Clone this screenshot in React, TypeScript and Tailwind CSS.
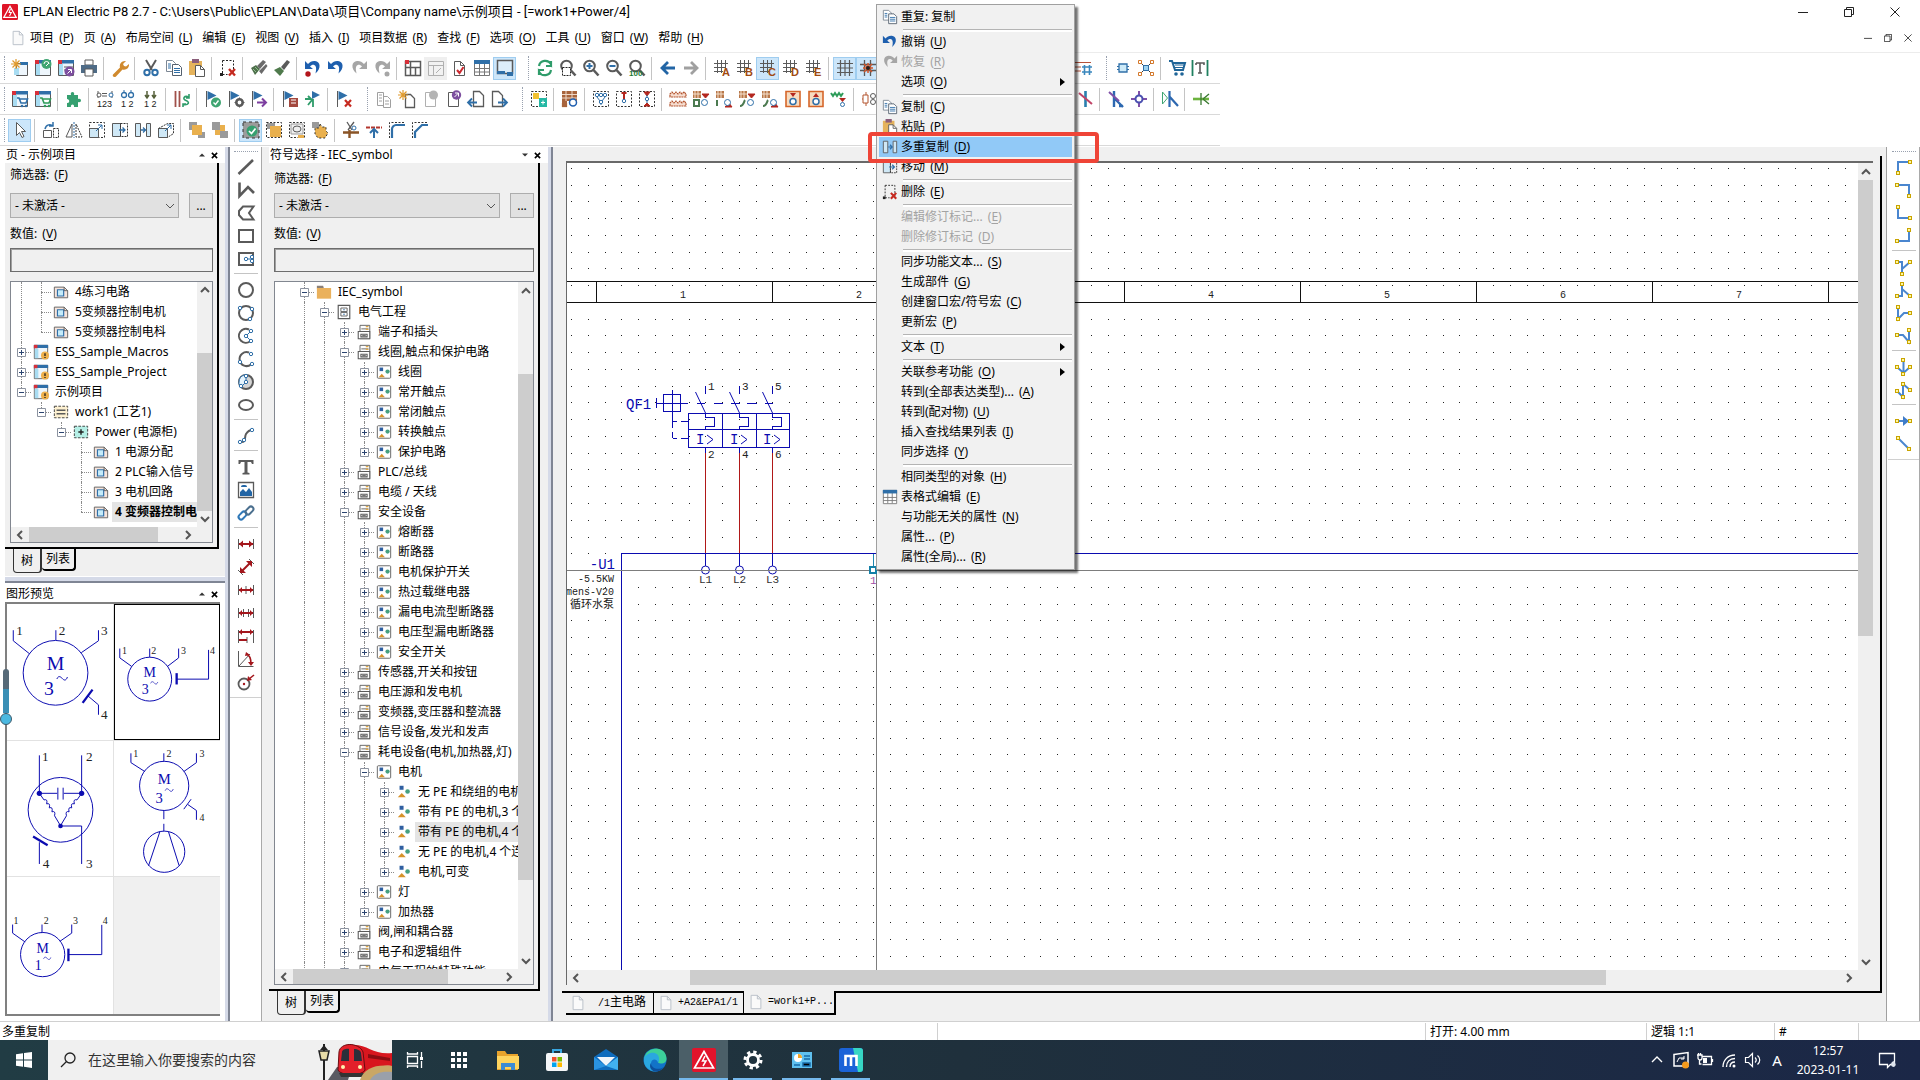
import type { ReactNode } from "react";

// ---------------------------------------------------------------- icons

const BLUE = "#2f6fa8";
const GRAY = "#5a5a5a";
const RED = "#b3261e";

const star = (
  <path d="M5 0v10M0 5h10M1.5 1.5l7 7M8.5 1.5l-7 7" stroke="#e09a2c" strokeWidth="1.2" />
);
const win = (
  <>
    <path d="M1.5 1.5h15v15h-15z" fill="#eef6fc" stroke={GRAY} />
    <path d="M1 1h16v3.5H1z" fill={BLUE} />
    <path d="M1 1h4v4H1z" fill="#d8303a" />
    <path d="M2 5h4v11H2z" fill="#a8dcf2" />
  </>
);
const page = <path d="M4.5 2.5h6l4 4v10h-10z M10.5 2.5v4h4" fill="#fff" stroke={GRAY} />;
const pageOff = <path d="M4.5 2.5h6l4 4v10h-10z M10.5 2.5v4h4" fill="#fff" stroke="#b0b0b0" />;
const dash = <path d="M1.5 1.5h15v15h-15z" fill="none" stroke="#333" strokeDasharray="2 1.5" />;
const flag = (
  <>
    <path d="M2.5 1v16" stroke={GRAY} />
    <path d="M3.5 1l9 4.5-9 4.5z" fill={BLUE} />
  </>
);
const mesh = <path d="M5.5 1v16M11.5 1v16M1 5.5h16M1 11.5h16" stroke={GRAY} strokeWidth="1.3" fill="none" />;
const meshLetter = (c: string) => (
  <>
    <path d="M4.5 1v13M8.5 1v13M12.5 1v8M1 4.5h14M1 8.5h11M1 12.5h9" stroke={GRAY} fill="none" />
    <text x="9" y="17" fontSize="11" fontWeight="bold" fontFamily="Liberation Sans" fill="#a04a10">{c}</text>
  </>
);
const lens = (inner: ReactNode) => (
  <>
    <circle cx="7.5" cy="7" r="5.3" fill="#fff" stroke={GRAY} strokeWidth="2" />
    <path d="M11.5 11l5 5.5" stroke={GRAY} strokeWidth="2.6" />
    {inner}
  </>
);
const wire = (d: string, pts: [number, number][]) => (
  <>
    <path d={d} fill="none" stroke="#4a86cf" strokeWidth="2" />
    {pts.map(([x, y]) => (
      <rect key={`${x}-${y}`} x={x - 1.5} y={y - 1.5} width="3" height="3" fill="#fff7a0" stroke="#c9a400" />
    ))}
  </>
);
const dots = (pts: [number, number][]) =>
  pts.map(([x, y]) => <circle key={`${x}-${y}`} cx={x} cy={y} r="1.7" fill="#fff" stroke={BLUE} />);
const copyIcon = (
  <>
    <path d="M1.5 1.5h6l3 3v8h-9z" fill="#fff" stroke="#7c8794" />
    <path d="M7.5 5.5h6l3 3v8h-9z" fill="#fff" stroke="#54606e" />
    <path d="M3 5h3M3 7h3M3 9h3M9 9.5h6M9 11.5h6M9 13.5h6" stroke={BLUE} />
  </>
);
const undoShape = "M1 2v8h8L6 7.500c3-3.500 7-1.500 6 4l-.5 3c6-5 5-12-.5-12.500-3-.3-5 1-7 3z";
const redoShape = "M17 2v8H9l3-2.500c-3-3.500-7-1.500-6 4l.5 3c-6-5-5-12 .5-12.500 3-.3 5 1 7 3z";
const busy = (a: string, b: string) => (
  <>
    <path d="M1 1h8v7H1z" fill="#b8784a" />
    <path d="M3 1v7M6 1v7M1 4h8" stroke="#f4e0cc" />
    <path d={a} fill={RED} stroke={RED} />
    <path d={b} fill="none" stroke="#4c7a50" strokeWidth="2" />
    <circle cx="12.500" cy="12.500" r="3" fill="#fff" stroke={BLUE} />
  </>
);

const ICONS: Record<string, ReactNode> = {
  newProject: <><path d="M5.500 4.500h11v12h-11z" fill="#eef6fc" stroke={GRAY} /><path d="M9 3h8v3H9z" fill={BLUE} /><path d="M3 9h5v7H3z" fill="#a8dcf2" />{star}</>,
  openProject: <>{win}<circle cx="12.500" cy="5" r="5" fill="#3fa572" /><path d="M10 5a2.500 2.500 0 0 1 5 0M12 7l3-3" stroke="#fff" fill="none" /></>,
  closeProject: <>{win}<path d="M7 8h9M7 11h9" stroke={GRAY} /><circle cx="12.500" cy="12.500" r="5" fill="#7d4f9f" /><path d="M10.500 14.500l3.500-3.500M11 10.500h3.500V14" stroke="#fff" fill="none" /></>,
  print: <><path d="M5 1h8v5H5z" fill="#fff" stroke={GRAY} /><path d="M1 6h16v8H1z" fill="#4e6b86" /><path d="M5 10h8v7H5z" fill="#fff" stroke={GRAY} /></>,
  wrench: <path d="M2 15.500l7-7c-1-4 2-7 6-6.500l-3 3 1 2 2 .5 3-2.500c.5 4-3 6.500-6.500 5.500l-6.500 7c-2 1.500-4-.5-3-2z" fill="#d08a2e" />,
  cut: <><path d="M4 1l6 10M14 1L8 11" stroke={GRAY} strokeWidth="2" /><circle cx="5" cy="13.500" r="2.700" fill="none" stroke={BLUE} strokeWidth="2" /><circle cx="13" cy="13.500" r="2.700" fill="none" stroke={BLUE} strokeWidth="2" /></>,
  copy: copyIcon,
  paste: <><path d="M1 2h13v14H1z" fill="#e5b35c" /><path d="M4 0h7v4H4z" fill="#8b5e7a" /><path d="M7.500 6.500h5l4 4v7h-9z" fill="#fff" stroke={GRAY} /><path d="M12.500 6.500v4h4" fill="none" stroke={GRAY} /></>,
  deleteSel: <><path d="M3.500 1.500h11v12M3.500 1.500v14h5" fill="none" stroke="#222" strokeDasharray="2 1.500" /><path d="M1 14h3v3H1z" fill="#222" /><path d="M10 10l6 6.500M16 10l-6 6.500" stroke="#c62a20" strokeWidth="2.400" /></>,
  brushes: <><path d="M1 9l5-3 4 4-5 6zM8 11l6-3" fill="#4f6f4c" /><path d="M7 7l6-6 3 2-6 7zM9 12l7-7 1.500 2-6 8z" fill="#6a6a6a" /><path d="M3 10l3 3M5 8l4 4" stroke="#8fbf8b" /></>,
  brush: <><path d="M1 11l6-3 4 4-4 5z" fill="#4f7a4c" /><path d="M8 8l6-7 3 2-6 8z" fill={GRAY} /></>,
  undoRed: <><path d={undoShape} fill="#1e5fae" /><circle cx="4" cy="15" r="2.700" fill="#b3151c" /></>,
  undo: <path d={undoShape} fill="#1e5fae" />,
  redo: <path d={redoShape} fill="#a6a6a6" />,
  redoDot: <><path d={redoShape} fill="#a6a6a6" /><circle cx="14" cy="15" r="2.500" fill="#a6a6a6" /></>,
  layout: <><path d="M1.500 2.500h15v14h-15zM6.500 2v15M1 8.500h16M11.500 8v9" fill="#fff" stroke={GRAY} strokeWidth="1.500" /><path d="M1 1h4v4H1z" fill="#d8303a" /></>,
  layoutOff: <path d="M1.500 2.500h15v14h-15zM1 6.500h16M6.500 6.500v10M9 14l5-5" fill="#f2f2f2" stroke="#b0b0b0" />,
  pageCheck: <>{page}<path d="M7 11l2.500 3 4-6" fill="none" stroke="#cc2a30" strokeWidth="2" /></>,
  table: <><path d="M1.500 1.500h15v15h-15zM1.500 9.500h15M1.500 13h15M6.500 4v12M11.500 4v12" fill="#fff" stroke="#777" /><path d="M1 1h16v4H1z" fill={BLUE} /></>,
  panelBottom: <><path d="M1.500 1.500h15v13h-15z" fill="#dceefb" stroke={GRAY} strokeWidth="1.500" /><path d="M1 12h8v3H1zM11 13h6v4h-6z" fill={BLUE} /></>,
  refresh: <path d="M3 7c1-6 9-7 12-2V2M15 2v5h-5M15 11c-1 6-9 7-12 2v3M3 16v-5h5" fill="none" stroke="#2f9c6a" strokeWidth="2.200" />,
  zoomWindow: <>{lens(null)}<path d="M3.500 8.500h8v8h-8z" fill="#fff" stroke="#222" strokeDasharray="2 1" /></>,
  zoomIn: lens(<path d="M4.500 7h6M7.500 4v6" stroke={BLUE} strokeWidth="2" />),
  zoomOut: lens(<path d="M4.500 7h6" stroke={BLUE} strokeWidth="2" />),
  zoom100: <>{lens(null)}<text x="1" y="17" fontSize="8" fontWeight="bold" fontFamily="Liberation Sans" fill="#1e7a34">100</text></>,
  back: <path d="M3 9h13M9 3L3 9l6 6" fill="none" stroke="#2265a5" strokeWidth="2.800" />,
  forward: <path d="M2 9h13M9 3l6 6-6 6" fill="none" stroke="#a0a0a0" strokeWidth="2.800" />,
  meshA: meshLetter("A"),
  meshB: meshLetter("B"),
  meshC: meshLetter("C"),
  meshD: meshLetter("D"),
  meshE: meshLetter("E"),
  grid: <path d="M4.500 1v16M9 1v16M13.500 1v16M1 4.500h16M1 9h16M1 13.500h16" stroke={GRAY} strokeWidth="1.200" />,
  gridSnap: <>{mesh}<path d="M9 4v10M4 9h10M5 5l8 8M13 5l-8 8" stroke="#d5562a" strokeWidth="1.500" /><circle cx="9" cy="9" r="2" fill="#222" /></>,
  alignGrid: <><path d="M1 3.500h16M1 8h6M1 12h6" stroke="#b5523a" /><path d="M8 8h10M8 13h10M10.500 6v10M15.500 6v10" stroke="#3a87bd" strokeWidth="1.600" /></>,
  chip: <><path d="M5 5h8v8H5z" fill="#cdeaf8" stroke={BLUE} strokeWidth="1.300" /><path d="M3 7.500h2M3 10.500h2M13 7.500h2M13 10.500h2" stroke={BLUE} /></>,
  nodes: <><path d="M3 3l12 12M15 3L3 15" stroke="#333" /><path d="M6.500 6.500h5v5h-5z" fill="#9ed3f0" stroke={BLUE} /><path d="M1.500 1.500h3v3h-3zM13.500 1.500h3v3h-3zM1.500 13.500h3v3h-3zM13.500 13.500h3v3h-3z" fill="#fff" stroke="#d5782a" /></>,
  cart: <><path d="M1 2h3l3 9h8l2-7H5" fill="none" stroke="#1f6598" strokeWidth="2" /><path d="M7 6h9M7 8.500h8" stroke="#1f6598" /><circle cx="8" cy="15" r="1.800" fill="#1f6598" /><circle cx="14" cy="15" r="1.800" fill="#1f6598" /></>,
  textBars: <><path d="M1.500 1v16M16.500 1v16" stroke="#208060" strokeWidth="1.800" /><path d="M5 4h8v2M5 4v2M9 4v10M7 14h4" fill="none" stroke={GRAY} strokeWidth="1.600" /></>,
  // second bar
  winCart: <>{win}<path d="M6 8h2l2 5h5l1.500-4H8.500" fill="#fff" stroke={BLUE} strokeWidth="1.600" /><circle cx="11" cy="16" r="1.300" fill={BLUE} /><circle cx="15" cy="16" r="1.300" fill={BLUE} /></>,
  winCartGreen: <>{win}<path d="M6 8h2l2 5h5l1.500-4H8.500" fill="#fff" stroke="#2f9c5a" strokeWidth="1.600" /><circle cx="11" cy="16" r="1.300" fill="#2f9c5a" /><circle cx="15" cy="16" r="1.300" fill="#2f9c5a" /></>,
  puzzle: <path d="M2 5h4c-1.500-4 4.500-4 3 0h4v4c4-1.500 4 4.500 0 3v5H9c1-3.500-4-3.500-3 0H2v-4c3 .5 3-4 0-4z" fill="#35a070" />,
  num123: <><path d="M2 1v7M6 3.500h5M6 6h5M16 1v7" fill="none" stroke={GRAY} /><circle cx="3" cy="5" r="2" fill="#fff" stroke={GRAY} /><circle cx="15" cy="5" r="2" fill="#fff" stroke={BLUE} /><text x="1" y="17" fontSize="9" fontFamily="Liberation Sans" fill="#222">123</text></>,
  num12: <><circle cx="5" cy="5" r="2.500" fill="#fff" stroke={BLUE} strokeWidth="1.300" /><circle cx="12" cy="5" r="2.500" fill="#fff" stroke={BLUE} strokeWidth="1.300" /><path d="M5 0v2M12 0v2" stroke={BLUE} /><text x="2" y="17" fontSize="9" fontFamily="Liberation Sans" fill="#222">1 2</text></>,
  num12b: <><path d="M5 1v7M3 5l2 3 2-3M12 1v7M10 5l2 3 2-3" fill="none" stroke="#55603a" strokeWidth="1.500" /><text x="2" y="17" fontSize="9" fontFamily="Liberation Sans" fill="#222">1 2</text></>,
  barsSync: <><path d="M2.500 1v16M6.500 1v16" stroke="#a0504a" strokeWidth="1.800" /><path d="M16 7c-5-2-7 2-3 3.500s3 5-3 4M16 4v4h-3M10 17v-3h3" fill="none" stroke="#2f9c6a" strokeWidth="1.600" /></>,
  flagOk: <>{flag}<circle cx="12" cy="12.500" r="5" fill="#3fa572" /><path d="M9.500 12.500l2 2 3-4" fill="none" stroke="#fff" strokeWidth="1.400" /></>,
  flagGear: <>{flag}<circle cx="12.500" cy="12.500" r="3.200" fill="none" stroke={GRAY} strokeWidth="2.600" /><path d="M12.500 7.500v10M7.500 12.500h10" stroke={GRAY} strokeDasharray="1.500 7" /></>,
  flagNext: <>{flag}<path d="M7 12.500h8M12 8.500l4 4-4 4" fill="none" stroke="#7d3fa0" strokeWidth="2" /></>,
  flagBook: <>{flag}<path d="M8 8h9v9H8z" fill="#a3483e" /><path d="M10 10h5M10 13h5" stroke="#fff" /></>,
  flagArrow: <><path d="M8 1l8 4-8 4z" fill={BLUE} /><path d="M1 9h6M4 6l4 4M4 15l4-5M9 9v8" stroke="#2f9c6a" strokeWidth="1.800" fill="none" /></>,
  flagDel: <>{flag}<path d="M10 10l6 6.500M16 10l-6 6.500" stroke="#c62a20" strokeWidth="2.200" /></>,
  pagesOff: <><path d="M2.500 2.500h6v13h-6zM8.500 6.500h4l3 3v8h-7z" fill="#fff" stroke="#a0a0a0" /><path d="M4 5h3M4 8h3M4 11h3M10 11h4M10 14h4" stroke="#a0a0a0" /></>,
  pageNew: <><path d="M7.500 4.500h5l4 4v9h-9z" fill="#fff" stroke={GRAY} strokeWidth="1.300" />{star}</>,
  pageSyncOff: <>{pageOff}<circle cx="12.500" cy="5" r="4.500" fill="#b4b4b4" /></>,
  pageUp: <>{page}<circle cx="12.500" cy="5" r="4.700" fill="#7d4f9f" /><path d="M10.500 7l4-4M11 3h3.500v3.500" stroke="#fff" fill="none" /></>,
  pagePrev: <><path d="M6.500 1.500h6l4 4v11h-10z" fill="#fff" stroke={GRAY} strokeWidth="1.300" /><path d="M1 12.500h9M5 8.500l-4 4 4 4" fill="none" stroke={BLUE} strokeWidth="1.800" /></>,
  pageNext: <><path d="M2.500 1.500h6l4 4v11h-10z" fill="#fff" stroke={GRAY} strokeWidth="1.300" /><path d="M8 12.500h9M13 8.500l4 4-4 4" fill="none" stroke={BLUE} strokeWidth="1.800" /></>,
  macro: <>{dash}<path d="M3 3h6v6H3z" fill="#f2c230" /><path d="M9 8h8v9H9z" fill="#25b8a4" /><path d="M11 12.500h4M13 10.500v4" stroke="#fff" /></>,
  bricks: <><path d="M1 1h15v10H1z" fill="#a8643c" /><path d="M1 4.500h15M1 8h15M5 1v10M11 1v10M1 13h5v4H1z" stroke="#efd9c8" /><path d="M1 11h5v6H1z" fill="#a8643c" /><circle cx="12" cy="12.500" r="3.500" fill="#fff" stroke="#1f5fb0" strokeWidth="1.500" /></>,
  dashNet: <>{dash}<path d="M5 7l3 4M13 7l-3 4M9 12v3" stroke={BLUE} />{dots([[5, 5], [9, 5], [13, 5], [9, 12]])}</>,
  dashPin: <>{dash}<path d="M9 3v6M6.500 3h5" stroke={RED} strokeWidth="2" />{dots([[9, 11]])}</>,
  dashUp: <>{dash}<path d="M6 2h6L9 6zM6 16h6l-3-3z" fill={RED} stroke={RED} /><path d="M9 5v8" stroke={BLUE} />{dots([[9, 9]])}</>,
  coils: <path d="M1 7V4l2-2 2 2 2-2 2 2 2-2 2 2 2-2 2 2v3zM1 16v-3l2-2 2 2 2-2 2 2 2-2 2 2 2-2 2 2v3z" fill="#f6ddd0" stroke="#b3542e" strokeWidth="1.200" strokeDasharray="2 .6" />,
  busA: busy("M10 4h7l-3.500 4z", "M2 10h5v6H2z"),
  busB: busy("M10 17l4-4 3 4z", "M2 10v6"),
  busC: busy("M10 4h7l-3.500 4z", "M2 16c4 0 4-5 5-6"),
  busD: busy("M10 17l4-4 3 4z", "M2 16c4 0 4-5 5-6"),
  boxDown: <><path d="M2 1.500h14v15H2z" fill="#f7dcc0" stroke="#d5662a" strokeWidth="1.600" /><path d="M6 3h6L9 7z" fill={RED} /><circle cx="9" cy="11.500" r="3" fill="#fff" stroke={BLUE} strokeWidth="1.500" /></>,
  boxUp: <><path d="M2 1.500h14v15H2z" fill="#f7dcc0" stroke="#d5662a" strokeWidth="1.600" /><path d="M6 7h6L9 3z" fill={RED} /><circle cx="9" cy="11.500" r="3" fill="#fff" stroke={BLUE} strokeWidth="1.500" /></>,
  wave: <><path d="M1 3l2 3 2-3 2 3 2-3 2 3 2-3" fill="none" stroke="#2f9c5a" strokeWidth="2" /><path d="M9 8h7l-3.500 4z" fill={RED} /><circle cx="12.500" cy="14.500" r="2" fill="#fff" stroke={BLUE} /></>,
  fuses: <><path d="M5 2v14M1 9h3" stroke="#b3542e" /><path d="M2 5h5v8H2z" fill="#fff" stroke="#b3542e" /><circle cx="12" cy="6" r="2.500" fill="#fff" stroke={GRAY} /><circle cx="12" cy="12" r="2.500" fill="#fff" stroke={GRAY} /></>,
  slashCross: <><path d="M9.500 1v16" stroke="#2a7fae" strokeWidth="2.600" /><path d="M3 3l13 11" stroke="#c04468" strokeWidth="2" /></>,
  branch: <><path d="M7 1v16M7 8l9 9M12 16h4" fill="none" stroke="#2d68b0" strokeWidth="2.400" /><path d="M2 2l10 9" stroke="#8050a8" strokeWidth="2" /></>,
  node: <><path d="M9 1v16M1 9h16" stroke="#8050a8" strokeWidth="2" /><circle cx="9" cy="9" r="3.500" fill="#fff" stroke="#4a4fb0" strokeWidth="2" /></>,
  gate: <><path d="M1.500 2v12l5-6z" fill="#fff" stroke="#3fa572" /><path d="M8.500 1v16M8 6l9 10" stroke="#2d68b0" strokeWidth="2.200" fill="none" /></>,
  plug: <><path d="M1 9h16" stroke="#6db33f" strokeWidth="2.600" /><path d="M9 3v12M11 9l6-5M11 9l6 5" stroke="#3a7a30" strokeWidth="1.300" /></>,
  // third bar
  cursor: <path d="M5.500 1.500v13l3-3 2.500 5 2-1-2.500-5h4z" fill="#fff" stroke={GRAY} />,
  rotate: <><path d="M1.500 9.500h8v7h-8z" fill="#fff" stroke={GRAY} /><path d="M11.500 7.500h5v9h-5z" fill="none" stroke="#333" strokeDasharray="2 1" /><path d="M3 8c1-5 6-5 8-3M11 1v4H7" fill="none" stroke={BLUE} strokeWidth="1.500" /></>,
  mirror: <><path d="M7 3v13H1z" fill="#fff" stroke={GRAY} /><path d="M9 1v16" stroke={BLUE} strokeDasharray="2 1" /><path d="M11 3v13h6z" fill="none" stroke="#333" strokeDasharray="2 1" /></>,
  scale: <>{dash}<path d="M1.500 7.500h9v9h-9z" fill="#cfe8f6" stroke={GRAY} /><path d="M8 10l6-6M10 4h4v4" fill="none" stroke={BLUE} /></>,
  move: <><path d="M1.500 2.500h8v13h-8z" fill="#cfe8f6" stroke={GRAY} /><path d="M9.500 2.500h7v13h-7z" fill="none" stroke="#333" strokeDasharray="2 1" /><path d="M8 9h6M11.500 6.500l2.500 2.500-2.500 2.500" fill="none" stroke={BLUE} strokeWidth="1.300" /></>,
  multi: <><path d="M1.500 2.500h5v13h-5zM12.500 2.500h4v13h-4z" fill="#cfe8f6" stroke={GRAY} /><path d="M7 9h5M9 6.500l2.500 2.500L9 11.500" fill="none" stroke={BLUE} strokeWidth="1.300" /></>,
  stretch: <><path d="M1.500 7.500h9v9h-9z" fill="#cfe8f6" stroke={GRAY} /><path d="M1.500 7.500l9-5h6v10l-6 4" fill="none" stroke="#333" strokeDasharray="2 1" /><path d="M8 10l6-6M10 4h4v4" fill="none" stroke={BLUE} /></>,
  front: <><path d="M1 1h8v8H1zM10 11h7v6h-7z" fill="#9a9a9a" /><path d="M4 4h10v10H4z" fill="#e9b04e" /></>,
  behind: <><path d="M4 4h10v10H4z" fill="#e9b04e" /><path d="M1 1h8v8H1zM9 10h8v7H9z" fill="#9a9a9a" /></>,
  groupOk: <><path d="M1 1h16v16H1z" fill="#9b9b9b" stroke="#333" strokeDasharray="3 3" /><circle cx="10" cy="10" r="5.500" fill="#35a070" /><path d="M7 10l2.500 2.500 4-5" fill="none" stroke="#fff" strokeWidth="1.700" /></>,
  group: <>{dash}<path d="M2 2h8v6H2z" fill="#9a9a9a" /><path d="M5 5h11v11H5z" fill="#e9b04e" /></>,
  ungroup: <>{dash}<path d="M3 3h12v10H3z" fill="#efefef" stroke="#9a9a9a" /><ellipse cx="9" cy="8" rx="4" ry="3" fill="none" stroke={GRAY} /><path d="M10 14h6v3h-6z" fill="#e9b04e" /></>,
  groupStar: <><path d="M1 1h7v6H1z" fill="#9a9a9a" /><path d="M9 3l2 3h4v4l2 2-3 5H7l-3-4V7h4z" fill="#e9b04e" stroke="#333" strokeDasharray="2 2" /></>,
  trim: <><path d="M7.500 9v8M1 11.500h16" stroke="#8a5426" strokeWidth="2.400" /><path d="M5 1l5 8M12 1L6 9" stroke={GRAY} strokeWidth="1.300" /><circle cx="12" cy="7" r="2" fill="none" stroke={BLUE} /></>,
  extend: <><path d="M1 6.500h16" stroke="#b3362e" strokeWidth="2" strokeDasharray="4 1" /><path d="M9 17V8M5 12l4-4 4 4" fill="none" stroke={BLUE} strokeWidth="2" /></>,
  corner: <><path d="M1.500 17V1.500H17" fill="none" stroke="#333" strokeDasharray="2 1.500" /><path d="M4 17V8c0-2 2-4 4-4h9" fill="none" stroke={BLUE} strokeWidth="2.200" /></>,
  chamfer: <><path d="M1.500 17V1.500H17" fill="none" stroke="#333" strokeDasharray="2 1.500" /><path d="M4 17v-6l7-7h6" fill="none" stroke={BLUE} strokeWidth="2.200" /></>,
  // drawing bar
  line: <path d="M1.500 16L16 2" stroke={GRAY} strokeWidth="2.600" />,
  polyline: <path d="M2.500 1.500V15L11 6l6 6" fill="none" stroke={GRAY} strokeWidth="2.600" />,
  polygon: <path d="M6 2.500h10.500L12 9l4.500 6.500H6L2 11V7z" fill="none" stroke={GRAY} strokeWidth="2" />,
  rect: <path d="M2 3h14v12H2z" fill="none" stroke={GRAY} strokeWidth="2" />,
  rectPoint: <><path d="M2 3h14v12H2z" fill="none" stroke={GRAY} strokeWidth="2" /><path d="M9 9h7" stroke={BLUE} />{dots([[9, 9], [15, 7], [15, 11]])}</>,
  circle: <circle cx="9" cy="9" r="7" fill="none" stroke={GRAY} strokeWidth="2" />,
  circle3: <><circle cx="9" cy="9" r="7" fill="none" stroke={GRAY} strokeWidth="2" />{dots([[3, 4], [15, 5], [13, 15]])}</>,
  arcCenter: <><path d="M12 2.500a7 7 0 1 0 1 12" fill="none" stroke={GRAY} strokeWidth="2" /><path d="M14 4L9 9l5 5" fill="none" stroke={BLUE} />{dots([[14, 4], [9, 9], [14, 14]])}</>,
  arc3: <><path d="M12 2.500a7 7 0 1 0 2 12" fill="none" stroke={GRAY} strokeWidth="2" />{dots([[14, 4], [3, 12], [15, 14]])}</>,
  sector: <><circle cx="9" cy="9" r="7" fill="#d5d5d5" stroke={GRAY} strokeWidth="2" /><path d="M9 2v7l-5 5A7 7 0 0 1 9 2z" fill="#e6f4fd" stroke={BLUE} />{dots([[9, 3], [9, 9], [4, 13]])}</>,
  ellipse: <ellipse cx="9" cy="9" rx="7" ry="5" fill="none" stroke={GRAY} strokeWidth="2" />,
  spline: <><path d="M3 15c7 1 4-5 6-8s4-4 6-4" fill="none" stroke={GRAY} strokeWidth="2" />{dots([[3, 15], [15, 3], [7, 13]])}</>,
  text: <path d="M1.500 2h15v4h-1.500L14 4h-3.500v10.500l2 .5v1.500h-7V15l2-.5V4H4L3 6H1.500z" fill={GRAY} />,
  image: <><path d="M1.500 1.500h15v15h-15z" fill="#fff" stroke={GRAY} strokeWidth="1.300" /><path d="M3 15V11l3-3 3 3 3-4 3 4v4z" fill="#2265a5" /><path d="M4 6c0-2 2-2 3-2s3 0 3 2z" fill="#2265a5" /></>,
  link: <><rect x="1" y="9" width="9" height="5" rx="2.500" transform="rotate(-45 5.500 11.500)" fill="none" stroke="#2f78b8" strokeWidth="2" /><rect x="8" y="4" width="9" height="5" rx="2.500" transform="rotate(-45 12.500 6.500)" fill="none" stroke="#4b6f8e" strokeWidth="2" /></>,
  dimH: <><path d="M1.500 4v10M16.500 4v10" stroke={GRAY} /><path d="M2 9h14" stroke="#a3161c" strokeWidth="2" /><path d="M2 9l4-3.500v7zM16 9l-4-3.500v7z" fill="#a3161c" /></>,
  dimD: <><path d="M1 12l5 5M12 1l5 5" stroke={GRAY} /><path d="M4 14L14 4" stroke="#a3161c" strokeWidth="2" /><path d="M3 15v-6l6 6zM15 3H9l6 6z" fill="#a3161c" /></>,
  dimC: <><path d="M1.500 4v10M16.500 4v10M9 5v8" stroke={GRAY} /><path d="M2 9h14" stroke="#a3161c" strokeWidth="2" /><path d="M2 9l3-3v6zM16 9l-3-3v6z" fill="#a3161c" /></>,
  dimI: <><path d="M1.500 4v10M16.500 4v10M6.500 5v8M11.500 5v8" stroke={GRAY} /><path d="M2 9h14" stroke="#a3161c" strokeWidth="2" /><path d="M2 9l3-3v6zM16 9l-3-3v6z" fill="#a3161c" /></>,
  dimB: <><path d="M1.500 3v13M16.500 3v13M10 10v6" stroke={GRAY} /><path d="M2 5h14M2 13h8" stroke="#a3161c" strokeWidth="2" /><path d="M2 5l3-3v6zM16 5l-3-3v6z" fill="#a3161c" /></>,
  dimA: <><path d="M1.500 1v15.500h15M2 16L13 4" fill="none" stroke={GRAY} /><path d="M9 4c4 1 5 5 5 10" fill="none" stroke="#a3161c" strokeWidth="1.600" /><path d="M8 6l1-4 4 3zM11 12h6l-3 4z" fill="#a3161c" /></>,
  dimR: <><circle cx="7" cy="11" r="5.500" fill="none" stroke={GRAY} strokeWidth="1.800" /><circle cx="7" cy="11" r="1.200" fill="#a3161c" /><path d="M17 2l-5 4" stroke="#a3161c" strokeWidth="1.600" /><path d="M10 8l1-5 4 4z" fill="#a3161c" /></>,
  // connection bar
  c1: wire("M3 15V4h12", [[3, 15], [15, 4]]),
  c2: wire("M2 4h12v11", [[2, 4], [14, 15]]),
  c3: wire("M3 3v11h12", [[3, 3], [15, 14]]),
  c4: wire("M2 14h12V3", [[2, 14], [14, 3]]),
  t1: wire("M2 4h5v12M15 4l-8 7", [[2, 4], [15, 4], [7, 16]]),
  t2: wire("M2 15h5V3M7 8l8 7", [[2, 15], [15, 15], [7, 3]]),
  t3: wire("M3 3v12l6-6h6", [[3, 3], [3, 15], [15, 9]]),
  t4: wire("M14 3v12L8 8H2", [[14, 3], [14, 15], [2, 8]]),
  j1: wire("M8.500 2v13M2 9l6.500 6L15 9", [[8, 2], [2, 9], [15, 9], [8, 16]]),
  j2: wire("M2 10l6 6V3l7 6", [[2, 10], [8, 16], [8, 3], [15, 9]]),
  cArrow: <><path d="M2 9h13" stroke="#4a86cf" strokeWidth="2" /><path d="M8 4l6 5-6 5z" fill="#3f7cc8" />{wire("", [[2, 9], [15, 9]])}</>,
  cDiag: wire("M3 3l11 11", [[3, 3], [14, 14]]),
  // tree nodes
  treePage: <><path d="M1.500 3.500h11l4 4v8h-15z" fill="#f6e4dc" stroke={GRAY} /><path d="M5 6.500h7v7H5z" fill="#c6ecfa" stroke={BLUE} strokeWidth="1.300" /><path d="M12.500 3.500v4h4" fill="none" stroke={GRAY} /></>,
  treeProject: <>{win}<circle cx="13.500" cy="13" r="4.500" fill="#efb04a" /><path d="M13.500 10.500v3M13.500 14.500v1.200" stroke="#222" strokeWidth="1.500" /></>,
  treePlant: <><path d="M1.500 2.500h15v13h-15z" fill="#fdf0d0" stroke="#333" strokeDasharray="3 1.500" /><path d="M4 7h10M4 11h10" stroke={GRAY} strokeWidth="1.600" /></>,
  treeLocation: <><path d="M1.500 2.500h15v13h-15z" fill="#b5efe6" stroke="#333" strokeDasharray="3 1.500" /><path d="M9 6v6M6 9h6" stroke="#222" strokeWidth="1.600" /></>,
  folder: <><path d="M1 2h7l1 3H1z" fill="#8b8078" /><path d="M1 4.500h16v12H1z" fill="#eab15c" /></>,
  cabinet: <><path d="M2.500 1.500h13v15h-13z" fill="#fff" stroke={GRAY} strokeWidth="1.300" /><path d="M5.500 4.500h7v4h-7zM5.500 9.500h7v4h-7z" fill="#fff" stroke={GRAY} /><path d="M8 6.500h2M8 11.500h2" stroke={BLUE} /></>,
  drawer: <><path d="M4.500 1.500h11v15h-11zM6 5.500h8" fill="#fff" stroke={GRAY} /><path d="M2.500 8.500h13v8h-13zM5.500 11.500h7v3h-7z" fill="#fff" stroke={GRAY} strokeWidth="1.200" /><path d="M7 13h4" stroke={GRAY} /><path d="M11 3h3M11 6h3" stroke="#e0aa4a" strokeWidth="1.500" /></>,
  shapesBox: <><rect x="1.500" y="2" width="15" height="14" rx="1" fill="#fff" stroke={GRAY} /><path d="M4 4h4v4H4z" fill="#2f5fa0" /><circle cx="13" cy="8.500" r="2.400" fill="#45a080" /><path d="M3 15l3.500-4 3.500 4z" fill="#d5922a" /></>,
  shapes: <><path d="M4 2h4.500v4.500H4z" fill="#2f5fa0" /><circle cx="13" cy="8.500" r="2.600" fill="#45a080" /><path d="M2 15l4.500-5 4.500 5z" fill="#d5922a" /></>,
  doc: <path d="M3.500 1.500h7l4 4v11h-11zM10.500 1.500v4h4" fill="#fafafa" stroke="#b5bcc6" />,
};

function Icon({ name, size = "size-[18px]" }: { name: string; size?: string }) {
  return (
    <svg viewBox="0 0 18 18" className={`${size} shrink-0 overflow-visible`} fill="none" aria-hidden="true">
      {ICONS[name]}
    </svg>
  );
}

function Logo({ className }: { className: string }) {
  return (
    <svg viewBox="0 0 18 18" className={className} aria-hidden="true">
      <rect width="18" height="18" rx="1.500" fill="#df1427" />
      <path d="M9 2.500L16 15H2z" fill="none" stroke="#fff" strokeWidth="1.400" />
      <path d="M9.500 5.500L8 9.500h2.500L8.500 13.500" fill="none" stroke="#fff" strokeWidth="1.200" />
    </svg>
  );
}

// ---------------------------------------------------------------- toolbars
// "|" separator, ":" dotted grip, "~" stretch that sits behind the popup menu,
// "*" prefix marks a pressed tool

const BAR_1 = "newProject openProject closeProject print | wrench | cut copy paste | deleteSel | brushes brush | undoRed undo redo redoDot | layout layoutOff pageCheck table *panelBottom : refresh zoomWindow zoomIn zoomOut zoom100 | back forward | meshA meshB *meshC meshD meshE | *grid *gridSnap ~ alignGrid : chip nodes | cart textBars";
const BAR_2 = "winCart winCartGreen | puzzle | num123 num12 num12b | barsSync | flagOk flagGear flagNext | flagBook flagArrow | flagDel : pagesOff pageNew pageSyncOff pageUp pagePrev pageNext : macro | bricks | dashNet dashPin dashUp | coils busA busB busC busD boxDown boxUp wave | fuses ~ slashCross | branch node | gate | plug";
const BAR_3 = "*cursor | rotate mirror scale move multi stretch | front behind | *groupOk group ungroup groupStar | trim extend corner chamfer";
const DRAW_BAR = "line polyline polygon rect rectPoint | circle circle3 arcCenter arc3 sector ellipse | spline | text image link | dimH dimD dimC dimI dimB dimA dimR";
const WIRE_BAR = "c1 c2 c3 c4 | t1 t2 t3 t4 | j1 j2 | cArrow cDiag";

function ToolButton({ name }: { name: string }) {
  const on = name.startsWith("*");
  const id = name.replace("*", "");
  return (
    <button
      aria-label={id}
      className={`grid size-[23px] shrink-0 place-items-center ${on ? "border border-[#9fcdf0] bg-[#cce6fa]" : id === "layoutOff" ? "bg-[#efefef]" : ""}`}
    >
      <Icon name={id} />
    </button>
  );
}

function ToolRow({ items }: { items: string }) {
  return (
    <div className="flex h-[31px] w-full items-center border-b border-[#d9d9d9]">
      <span className="ml-1 mr-[3px] h-6 border-l border-dotted border-gray-400" />
      {items.split(" ").map((t, i) => {
        if (t === "|") return <span key={i} className="mx-[3px] h-[23px] w-0.5 shrink-0 border-l border-[#c4c4c4]" />;
        if (t === ":") return <span key={i} className="ml-3 mr-1 h-6 shrink-0 border-l border-dotted border-gray-400" />;
        if (t === "~") return <span key={i} className="w-[192px] shrink-0" />;
        return <ToolButton key={i} name={t} />;
      })}
    </div>
  );
}

function ToolColumn({ items }: { items: string }) {
  return (
    <div className="flex w-8 shrink-0 flex-col items-center border-r border-[#a9a9a9] bg-white">
      <span className="mb-[3px] mt-1 w-6 border-t border-dotted border-gray-400" />
      {items.split(" ").map((t, i) =>
        t === "|" ? <span key={i} className="my-[3px] h-0.5 w-6 shrink-0 border-t border-[#c4c4c4]" /> : <ToolButton key={i} name={t} />
      )}
      <span className="mt-1 w-full border-t border-[#d0d0d0]" />
    </div>
  );
}

// ---------------------------------------------------------------- small parts

function Mnemonic({ label, k }: { label: string; k?: string }) {
  return <>{label}{k && <span className="ml-0.5"> (<span className="underline underline-offset-2">{k}</span>)</span>}</>;
}

function Chevron({ d, className = "size-[10px]" }: { d: string; className?: string }) {
  return (
    <svg viewBox="0 0 10 10" className={className} aria-hidden="true">
      <path d={d} fill="none" stroke="#555" strokeWidth="2" />
    </svg>
  );
}

function VScroll({ thumb }: { thumb: string }) {
  return (
    <div className="flex w-[15px] shrink-0 flex-col items-center bg-[#f0f0f0]">
      <span className="grid h-[17px] place-items-center"><Chevron d="M1 7l4-4 4 4" /></span>
      <div className="w-full flex-1"><div className={`w-full bg-[#cdcdcd] ${thumb}`} /></div>
      <span className="grid h-[17px] place-items-center"><Chevron d="M1 3l4 4 4-4" /></span>
    </div>
  );
}

function HScroll({ thumb }: { thumb: string }) {
  return (
    <div className="flex h-[15px] shrink-0 items-center bg-[#f0f0f0] pr-[15px]">
      <span className="grid w-[18px] place-items-center"><Chevron d="M7 1L3 5l4 4" /></span>
      <div className="flex h-full flex-1"><div className={`h-full bg-[#cdcdcd] ${thumb}`} /></div>
      <span className="grid w-[18px] place-items-center"><Chevron d="M3 1l4 4-4 4" /></span>
    </div>
  );
}

function PanelTitle({ title, up }: { title: string; up?: boolean }) {
  return (
    <div className="flex h-4 shrink-0 items-center bg-white pr-[5px]">
      <span className="flex-1 pl-px leading-4">{title}</span>
      <button aria-label="dock" className="grid w-3 place-items-center">
        <svg viewBox="0 0 8 8" className="size-[6px]"><path d={up ? "M0 6l4-4 4 4z" : "M0 2l4 4 4-4z"} fill="#333" /></svg>
      </button>
      <button aria-label="close" className="grid w-3 place-items-center">
        <svg viewBox="0 0 8 8" className="size-[7px]"><path d="M1 1l6 6M7 1L1 7" stroke="#000" strokeWidth="1.800" /></svg>
      </button>
    </div>
  );
}

function PanelTabs() {
  return (
    <div className="flex items-start pl-2">
      <button className="h-6 w-[29px] rounded-b border-b border-l border-r-2 border-[#333] bg-[#f0f0f0] leading-5">树</button>
      <button className="h-[22px] w-[34px] rounded-b border-b-2 border-r-2 border-black leading-5">列表</button>
    </div>
  );
}

function Filters({ id, low }: { id: string; low?: boolean }) {
  return (
    <>
      <label htmlFor={`${id}-filter`} className={`block h-[30px] leading-6 ${low ? "pt-1" : ""}`}><Mnemonic label="筛选器:" k="F" /></label>
      <div className="flex gap-[10px]">
        <div className="grid flex-1 items-center">
          <select id={`${id}-filter`} className="h-[25px] w-full appearance-none border border-[#adadad] bg-[#e1e1e1] pl-1 [grid-area:1/1]">
            <option>- 未激活 -</option>
          </select>
          <span className="mr-1 justify-self-end [grid-area:1/1]">
            <svg viewBox="0 0 10 10" className="size-[10px]"><path d="M1 3l4 4 4-4" fill="none" stroke="#555" /></svg>
          </span>
        </div>
        <button aria-label="filter settings" className="h-[25px] w-6 border border-[#adadad] bg-[#e1e1e1] leading-5">...</button>
      </div>
      <label htmlFor={`${id}-value`} className="block h-[30px] pt-1 leading-6"><Mnemonic label="数值:" k="V" /></label>
      <input id={`${id}-value`} className="mb-[9px] h-6 w-full border border-[#6d6d6d] bg-[#f0f0f0] px-1 shadow-[inset_1px_1px_0_#a0a0a0]" />
    </>
  );
}

// ---------------------------------------------------------------- trees
// guides: "|" line, "." blank, then the row's own cell:
// "+" "-" expander, "p" "_" the same on a last child, "t" leaf, "l" last leaf

type Row = [guides: string, icon: string, text: string, mark?: "bold" | "sel"];

const PAGE_TREE: Row[] = [
  ["|t", "treePage", "4练习电路"],
  ["|t", "treePage", "5变频器控制电机"],
  ["|l", "treePage", "5变频器控制电枓"],
  ["+", "treeProject", "ESS_Sample_Macros"],
  ["+", "treeProject", "ESS_Sample_Project"],
  ["_", "treeProject", "示例项目"],
  ["._", "treePlant", "work1 (工艺1)"],
  [".._", "treeLocation", "Power (电源柜)"],
  ["...t", "treePage", "1 电源分配"],
  ["...t", "treePage", "2 PLC输入信号"],
  ["...t", "treePage", "3 电机回路"],
  ["...l", "treePage", "4 变频器控制电", "bold"],
];

const SYMBOL_TREE: Row[] = [
  ["-", "folder", "IEC_symbol"],
  ["|-", "cabinet", "电气工程"],
  ["||+", "drawer", "端子和插头"],
  ["||-", "drawer", "线圈,触点和保护电路"],
  ["|||+", "shapesBox", "线圈"],
  ["|||+", "shapesBox", "常开触点"],
  ["|||+", "shapesBox", "常闭触点"],
  ["|||+", "shapesBox", "转换触点"],
  ["|||p", "shapesBox", "保护电路"],
  ["||+", "drawer", "PLC/总线"],
  ["||+", "drawer", "电缆 / 天线"],
  ["||-", "drawer", "安全设备"],
  ["|||+", "shapesBox", "熔断器"],
  ["|||+", "shapesBox", "断路器"],
  ["|||+", "shapesBox", "电机保护开关"],
  ["|||+", "shapesBox", "热过载继电器"],
  ["|||+", "shapesBox", "漏电电流型断路器"],
  ["|||+", "shapesBox", "电压型漏电断路器"],
  ["|||p", "shapesBox", "安全开关"],
  ["||+", "drawer", "传感器,开关和按钮"],
  ["||+", "drawer", "电压源和发电机"],
  ["||+", "drawer", "变频器,变压器和整流器"],
  ["||+", "drawer", "信号设备,发光和发声"],
  ["||-", "drawer", "耗电设备(电机,加热器,灯)"],
  ["|||-", "shapesBox", "电机"],
  ["||||+", "shapes", "无 PE 和绕组的电机"],
  ["||||+", "shapes", "带有 PE 的电机,3 个连接点"],
  ["||||+", "shapes", "带有 PE 的电机,4 个连接点", "sel"],
  ["||||+", "shapes", "无 PE 的电机,4 个连接点"],
  ["||||p", "shapes", "电机,可变"],
  ["|||+", "shapesBox", "灯"],
  ["|||p", "shapesBox", "加热器"],
  ["||+", "drawer", "阀,闸和耦合器"],
  ["||+", "drawer", "电子和逻辑组件"],
  ["||+", "drawer", "电气工程的特殊功能"],
];

function Guide({ c }: { c: string }) {
  if (c === ".") return <span className="w-5 shrink-0" />;
  const own = c !== "|";
  const half = "lp_".includes(c);
  return (
    <span className="grid h-5 w-5 shrink-0 items-center justify-items-center">
      <span className={`w-px border-l border-dotted border-[#8a8a8a] [grid-area:1/1] ${half ? "h-1/2 self-start" : "h-full"}`} />
      {own && <span className="w-1/2 justify-self-end border-t border-dotted border-[#8a8a8a] [grid-area:1/1]" />}
      {"+-p_".includes(c) && (
        <svg viewBox="0 0 9 9" className="size-[9px] [grid-area:1/1]">
          <path d="M.5.5h8v8h-8z" fill="#fff" stroke="#8c93a0" />
          <path d={"+p".includes(c) ? "M2 4.500h5M4.500 2v5" : "M2 4.500h5"} stroke="#2b4470" />
        </svg>
      )}
    </span>
  );
}

function Tree({ rows }: { rows: Row[] }) {
  return (
    <ul className="min-w-0 flex-1 overflow-hidden">
      {rows.map(([guides, icon, text, mark]) => (
        <li key={text} className="flex h-5 items-center whitespace-nowrap">
          {guides.split("").map((c, i) => <Guide key={i} c={c} />)}
          <span className="grid w-5 shrink-0 place-items-center"><Icon name={icon} size="size-4" /></span>
          <span className={`ml-px shrink-0 px-[3px] leading-5 ${mark ? "bg-[#e4e4e4]" : ""} ${mark === "bold" ? "font-bold" : ""}`}>{text}</span>
        </li>
      ))}
    </ul>
  );
}

// ---------------------------------------------------------------- symbol preview

const INK = "#0b0bb0";

function Motor({ cx, cy, r, sub, size }: { cx: number; cy: number; r: number; sub: string; size: number }) {
  return (
    <>
      <circle cx={cx} cy={cy} r={r} fill="none" stroke={INK} strokeWidth="3" />
      <g fill={INK} fontFamily="Liberation Serif" fontSize={size} textAnchor="middle">
        <text x={cx} y={cy - r * 0.08}>M</text>
        <text x={cx - r * 0.2} y={cy + r * 0.68}>{sub}</text>
      </g>
      <path
        transform={`translate(${cx + r * 0.02} ${cy + r * 0.15}) scale(${r / 98})`}
        d="M2 4c6-14 14-4 18 0s10 6 14-6" fill="none" stroke={INK} strokeWidth="3"
      />
    </>
  );
}

type PreviewProps = { box: string; lines: string; labels: [number, number, string][]; big?: boolean; children: ReactNode };

function Preview({ box, lines, labels, big, children }: PreviewProps) {
  return (
    <svg viewBox={box} className="h-full w-full" aria-hidden="true">
      {children}
      <path d={lines} fill="none" stroke={INK} strokeWidth="3" />
      {labels.map(([x, y, t]) => (
        <text key={t} x={x} y={y} fontSize={big ? 40 : 30} fontFamily="Liberation Serif" fill="#222">{t}</text>
      ))}
    </svg>
  );
}

function PreviewPanel() {
  return (
    <div className="mr-[5px] grid min-h-0 flex-1 grid-cols-[107px_1fr] grid-rows-3 border-b-2 border-l-2 border-t-2 border-[#808080] bg-[#e2e2e2]">
      <div className="mb-px mr-px min-h-0 bg-white">
        <Preview big box="18 132 321 408" labels={[[46, 224, "1"], [175, 224, "2"], [303, 224, "3"], [303, 479, "4"]]}
          lines="M37 210v32l50 40M166 210v30M295 210v32l-52 36M262 408l33 28v30">
          <Motor cx={165} cy={339} r={98} sub="3" size={60} />
          <path d="M247 430l30-40" stroke={INK} strokeWidth="7" />
        </Preview>
      </div>
      <div className="mb-px min-h-0 border border-black bg-white">
        <Preview box="342 135 310 402" labels={[[362, 282, "1"], [450, 282, "2"], [539, 282, "3"], [626, 282, "4"]]}
          lines="M355 266v28l36 26M445 266v26M532 266v28l-34 26M526 358h96V270">
          <Motor cx={445} cy={358} r={66} sub="3" size={42} />
          <path d="M526 340v34" stroke={INK} strokeWidth="7" />
        </Preview>
      </div>
      <div className="mb-px mr-px min-h-0 bg-white">
        <Preview big box="18 543 321 408" labels={[[124, 602, "1"], [257, 602, "2"], [257, 926, "3"], [126, 926, "4"]]}
          lines="M116 585v115h54M244 585v115h-54M172 683v36M188 683v36M180 799h64v115M116 848v66M116 700l14 20q12-4 8 12q12-4 8 12q12-4 8 12q12-4 8 12l18 30M244 700l-14 20q-12-4-8 12q-12-4-8 12q-12-4-8 12q-12-4-8 12l-18 30">
          <circle cx="180" cy="750" r="98" fill="none" stroke={INK} strokeWidth="3" />
          <g fill={INK}><circle cx="116" cy="700" r="8" /><circle cx="244" cy="700" r="8" /><circle cx="180" cy="799" r="7" /></g>
          <path d="M97 831l44 26" stroke={INK} strokeWidth="7" />
        </Preview>
      </div>
      <div className="mb-px min-h-0 bg-white">
        <Preview box="340 543 315 408" labels={[[396, 590, "1"], [496, 590, "2"], [595, 590, "3"], [595, 784, "4"]]}
          lines="M389 580v28l42 27M488 580v24M586 580v28l-38 27M560 734l26 18v28M548 748l22-30M488 752v26M488 792v22M476 816l-34 102M502 816l32 102">
          <Motor cx={489} cy={678} r={74} sub="3" size={44} />
          <circle cx="489" cy="876" r="62" fill="none" stroke={INK} strokeWidth="3" />
        </Preview>
      </div>
      <div className="mr-px min-h-0 bg-white">
        <Preview box="18 954 321 408" labels={[[38, 1092, "1"], [129, 1092, "2"], [218, 1092, "3"], [308, 1092, "4"]]}
          lines="M35 1095v26l38 27M124 1095v26M214 1095v26l-36 25M205 1186h100v-90">
          <Motor cx={126} cy={1186} r={67} sub="1" size={42} />
          <path d="M204 1168v38" stroke={INK} strokeWidth="7" />
        </Preview>
      </div>
      <div className="bg-[#f0f0f0]" />
    </div>
  );
}

// ---------------------------------------------------------------- schematic

const GRID = 16.76;
const SHEET_X = 567;
const SHEET_Y = 163;
let dotPath = "";
for (let r = 0; r < 90; r++) {
  for (let c = 0; c < 180; c++) dotPath += `M${Math.floor(4.7 + c * GRID)} ${Math.floor(5.3 + r * GRID)}h1v1h-1z`;
}

function Schematic() {
  const poles = [705, 739, 772];
  return (
    <svg className="h-full min-w-0 flex-1 bg-white" fill="none" shapeRendering="crispEdges" aria-label="schematic">
      <path d={dotPath} fill="#222" />
      {/* drawing is in window coordinates */}
      <g transform={`translate(${-SHEET_X} ${-SHEET_Y})`} fontFamily="Liberation Mono">
        <path d="M566 281.500h3000M566 302.500h3000" stroke="#111" />
        <path d="M596.500 281v21M772.500 281v21M948.500 281v21M1124.500 281v21M1300.500 281v21M1476.500 281v21M1652.500 281v21M1828.500 281v21" stroke="#111" />
        {[1, 2, 3, 4, 5, 6, 7].map((n) => (
          <text key={n} x={504 + n * 176} y="298" fontSize="10" fill="#222">{n}</text>
        ))}

        <g stroke={INK}>
          <path d="M656.500 398v10M656 403.500h32M672.500 390v38M663.500 394.500h17v17h-17z" />
          <path d="M672.500 432v6M673 421.500h4M681 421.500h7M673 438.500h4M681 438.500h7" />
          <path d="M688.500 413.500h101v34h-101zM688 429.500h101M722.500 413v34M756.500 413v34" />
          <path d="M697 403.500h8M714 403.500h9M731 403.500h9M747 403.500h10M765 403.500h8" />
          <path d="M621.500 2000V553.500h3000" />
        </g>
        {poles.map((x, i) => (
          <g key={x} transform={`translate(${x} 0)`}>
            <path d="M.5 386v8M.5 413v4h9v9h-9v4M.5 447v6M.5 553v13" stroke={INK} />
            <path d="M-9.500 392l10 21M2 435l6 4.500-6 4.500" stroke={INK} shapeRendering="auto" />
            <path d="M.5 453v100" stroke="#b01818" />
            <circle cx=".5" cy="570" r="4" stroke={INK} fill="#fff" shapeRendering="auto" />
            <text x="-9" y="444" fontSize="14" fill={INK}>I</text>
            <text x="3" y="390" fontSize="11" fill="#222">{2 * i + 1}</text>
            <text x="3" y="458" fontSize="11" fill="#222">{2 * i + 2}</text>
            <text x="-6" y="583" fontSize="11" fill="#333">{`L${i + 1}`}</text>
          </g>
        ))}
        <text x="626" y="409" fontSize="14" fill={INK}>QF1</text>
        <g textAnchor="end" fill="#222">
          <text x="615" y="569" fontSize="14" fill={INK}>-U1</text>
          <text x="614" y="582" fontSize="10">-5.5KW</text>
          <text x="614" y="595" fontSize="10">emens-V20</text>
          <text x="614" y="608" fontSize="11" fontFamily="Noto Sans CJK SC, sans-serif">循环水泵</text>
        </g>
        <path d="M566 570.500h3000M876.500 162v3000" stroke="#7d7d7d" />
        <path d="M873.500 554v13" stroke="#1f86b0" />
        <path d="M870 567h6v6h-6z" fill="#fff" stroke="#1480a8" strokeWidth="2" />
        <text x="870" y="584" fontSize="11" fill="#a050a8">1</text>
      </g>
    </svg>
  );
}

const SHEETS = [
  { text: <span className="pl-2">/1<span className="text-[12px]">主电路</span></span>, w: "w-[88px]" },
  { text: "+A2&EPA1/1", w: "w-[90px]" },
  { text: "=work1+P...", w: "w-[92px]" },
];

function Editor() {
  return (
    <section className="flex min-w-0 flex-1 flex-col border-r border-[#a0a0a0] bg-[#f0f0f0] pl-[9px]">
      <div className="mr-1 mt-[9px] flex min-h-0 flex-1 flex-col border-b-2 border-r-2 border-b-black border-r-black pb-[6px] pr-[7px]">
        <div className="ml-1 mt-[5px] flex min-h-0 flex-1 flex-col border-l border-t-2 border-[#696969]">
          <div className="flex min-h-0 flex-1">
            <Schematic />
            <VScroll thumb="h-[59%]" />
          </div>
          <HScroll thumb="ml-[105px] w-[73%]" />
        </div>
      </div>
      <div className="flex h-7 items-start pl-1">
        {SHEETS.map((s, i) => (
          <button key={i} className={`flex items-center justify-start gap-1 border-black pl-1 font-['Liberation_Mono','Noto_Sans_CJK_SC',monospace] text-[10px] ${s.w} ${i === 2 ? "-mt-0.5 h-6 border-b-2 border-r-2 bg-[#f0f0f0]" : "h-[22px] border-b-2 border-r"}`}>
            <Icon name="doc" size="size-4" />{s.text}
          </button>
        ))}
      </div>
    </section>
  );
}

// ---------------------------------------------------------------- popup menu

type Entry = { t: string; k?: string; icon?: string; off?: boolean; sub?: boolean; hot?: boolean } | "-";

const POPUP: Entry[] = [
  { t: "重复: 复制", icon: "copy" },
  "-",
  { t: "撤销", k: "U", icon: "undo" },
  { t: "恢复", k: "R", icon: "redo", off: true },
  { t: "选项", k: "O", sub: true },
  "-",
  { t: "复制", k: "C", icon: "copy" },
  { t: "粘贴", k: "P", icon: "paste" },
  { t: "多重复制", k: "D", icon: "multi", hot: true },
  { t: "移动", k: "M", icon: "move" },
  "-",
  { t: "删除", k: "E", icon: "deleteSel" },
  "-",
  { t: "编辑修订标记...", k: "E", off: true },
  { t: "删除修订标记", k: "D", off: true },
  "-",
  { t: "同步功能文本...", k: "S" },
  { t: "生成部件", k: "G" },
  { t: "创建窗口宏/符号宏", k: "C" },
  { t: "更新宏", k: "P" },
  "-",
  { t: "文本", k: "T", sub: true },
  "-",
  { t: "关联参考功能", k: "O", sub: true },
  { t: "转到(全部表达类型)...", k: "A" },
  { t: "转到(配对物)", k: "U" },
  { t: "插入查找结果列表", k: "I" },
  { t: "同步选择", k: "Y" },
  "-",
  { t: "相同类型的对象", k: "H" },
  { t: "表格式编辑", k: "E", icon: "table" },
  { t: "与功能无关的属性", k: "N" },
  { t: "属性...", k: "P" },
  { t: "属性(全局)...", k: "R" },
];

function PopupMenu() {
  return (
    <>
      <div className="absolute left-[876px] top-1 w-[199px] border border-[#a0a0a0] bg-[#f1f1f1] p-0.5 shadow-[3px_3px_2px_rgba(0,0,0,0.55)]">
        {POPUP.map((e, i) =>
          e === "-" ? (
            <div key={i} className="ml-6 h-[5px] border-b-2 border-white pt-0.5"><div className="border-t border-[#b4b4b4]" /></div>
          ) : (
            <button key={i} disabled={e.off} className={`flex h-5 w-full items-center ${e.hot ? "bg-[#91c9f7]" : ""} ${e.off ? "text-[#a3a3a3]" : "text-black"}`}>
              <span className="grid w-[22px] place-items-center">{e.icon && <Icon name={e.icon} size="size-4" />}</span>
              <span className="flex-1 text-left"><Mnemonic label={e.t} k={e.k} /></span>
              {e.sub && <svg viewBox="0 0 5 8" className="mr-[7px] h-2 w-[5px]"><path d="M0 0l5 4-5 4z" fill="#000" /></svg>}
            </button>
          )
        )}
      </div>
      <div className="absolute left-[868px] top-[132px] h-[31px] w-[231px] rounded border-4 border-[#ef4437]" />
    </>
  );
}

// ---------------------------------------------------------------- taskbar

const APPS: { name: string; run?: boolean; active?: boolean; art: ReactNode }[] = [
  { name: "apps", art: <path d="M4 4h4v4H4zM10 4h4v4h-4zM16 4h4v4h-4zM4 10h4v4H4zM10 10h4v4h-4zM16 10h4v4h-4zM4 16h4v4H4zM10 16h4v4h-4zM16 16h4v4h-4z" fill="#fff" /> },
  { name: "explorer", art: <><path d="M1 3h8l2 3h11v16H1z" fill="#e8a32c" /><path d="M1 8h22v13H1z" fill="#ffd45e" /><path d="M5 15h14v7h-4v-3H9v3H5z" fill="#3d8bd4" /></> },
  { name: "store", art: <><path d="M8 6V2h8v4" fill="none" stroke="#39a7e0" strokeWidth="2" /><rect x="1" y="5" width="22" height="18" rx="2" fill="#f4f6f8" /><path d="M7 9h4.500v4.500H7z" fill="#f0502a" /><path d="M12.500 9H17v4.500h-4.500z" fill="#7cba00" /><path d="M7 14.500h4.500V19H7z" fill="#00a3ee" /><path d="M12.500 14.500H17V19h-4.500z" fill="#ffb800" /></> },
  { name: "mail", art: <><path d="M0 9l12-8 12 8v13H0z" fill="#0f6cbd" /><path d="M3 9h18l-9 9z" fill="#f2f6fa" /><path d="M0 9l12 9-12 4z" fill="#2a93e0" /><path d="M24 9l-12 9 12 4z" fill="#41b1f0" /></> },
  { name: "edge", art: <><circle cx="12" cy="12" r="11.500" fill="#1273c8" /><path d="M1 11C3-3 24-3 23.500 11c-.3 5-6 5.500-8.500 3.500 2-5-5-9-14-3.500z" fill="#3ccf9a" /><path d="M1 11C3 3 17 2 16 12c0 1-.5 2-1 2.500-1-4-7-4-7 1 0 4 3 7 6 8C6 24 0 18 1 11z" fill="#2aa7e0" /><path d="M8 15c0 5 7 8 13 4-3 4-7 5-9 4.500-5-1-6-6-4-8.500z" fill="#0c4f9c" /></> },
  { name: "eplan", run: true, active: true, art: <><rect width="24" height="24" rx="2" fill="#e2142b" /><path d="M12 3.500L21.500 20h-19z" fill="none" stroke="#fff" strokeWidth="1.700" /><path d="M13 8l-2.500 5h3.500L11 18" fill="none" stroke="#fff" strokeWidth="1.500" /></> },
  { name: "settings", run: true, art: <><circle cx="12" cy="12" r="5.500" fill="none" stroke="#fff" strokeWidth="2.800" /><circle cx="12" cy="12" r="8" fill="none" stroke="#fff" strokeWidth="3" strokeDasharray="3.300 2.980" /></> },
  { name: "control panel", run: true, art: <><path d="M2 4h20v16H2z" fill="#5fc0ef" /><circle cx="8" cy="10" r="4" fill="#fff" /><path d="M8 10V6a4 4 0 0 1 4 4z" fill="#f5a623" /><path d="M14 8h6M14 11h6M4 17h6M13 15h7v3h-7z" stroke="#176aa8" strokeWidth="1.500" /></> },
  { name: "maxthon", run: true, art: <><rect width="24" height="24" rx="3" fill="#1b63d8" /><path d="M14 0h7a3 3 0 0 1 3 3v18a3 3 0 0 1-3 3h-2z" fill="#37d6c4" /><path d="M6.500 18V8h11v10M12 8v10" fill="none" stroke="#fff" strokeWidth="2.600" /></> },
];

function Train() {
  return (
    <svg viewBox="0 0 78 40" className="h-10 w-[78px] shrink-0" aria-hidden="true">
      <path d="M10 4v36" stroke="#222" strokeWidth="2" />
      <path d="M5 11h10l-2 9H7z" fill="#e8dca8" stroke="#222" strokeWidth="1.500" />
      <path d="M6 10l4-5 4 5z" fill="#222" />
      <path d="M14 40l9-13h15l-4 13z" fill="#5a5a62" />
      <path d="M40 5c14 0 20 10 38 8v13c-14-1-22 2-30 11H38z" fill="#d8161e" />
      <path d="M25 12c1-10 20-10 24 0l2 18c-2 6-25 6-27 0z" fill="#e3202a" stroke="#6b0a10" />
      <path d="M28 12c0-3 6-4 7-3v12h-8zM40 9c4 0 7 2 7 4l1 8h-8z" fill="#2a2f3a" />
      <path d="M54 14l22 4v3l-22-3z" fill="#8b0c12" />
      <circle cx="29" cy="27" r="2" fill="#fff3b0" /><circle cx="46" cy="27" r="2" fill="#fff3b0" />
      <path d="M25 33h28v4H27z" fill="#333" />
      <path d="M46 40c4-12 16-16 32-14v14z" fill="#c9a766" />
      <path d="M56 40c4-7 12-9 22-8v8z" fill="#9aa0aa" />
    </svg>
  );
}

function Taskbar() {
  return (
    <footer className="flex h-10 shrink-0 items-center bg-linear-to-r from-[#213c44] via-[#1f303c] to-[#1b2747] text-white">
      <button aria-label="start" className="grid w-12 place-items-center">
        <svg viewBox="0 0 16 16" className="size-4"><path d="M0 2.200L7 1.200V7.500H0zM8 1l8-1v7.500H8zM0 8.500h7v6.300l-7-1zM8 8.500h8V16l-8-1.200z" fill="#fff" /></svg>
      </button>
      <div className="flex h-10 w-[344px] items-center bg-[#f0f0f0] pl-3">
        <svg viewBox="0 0 16 16" className="mr-3 size-4 shrink-0"><circle cx="10" cy="6" r="5" fill="none" stroke="#222" strokeWidth="1.300" /><path d="M6.500 9.500L1 15" stroke="#222" strokeWidth="1.300" /></svg>
        <input aria-label="search" placeholder="在这里输入你要搜索的内容" className="min-w-0 flex-1 bg-transparent text-[14px] placeholder:text-[#333]" />
        <Train />
      </div>
      <button aria-label="task view" className="grid w-[42px] place-items-center pl-1">
        <svg viewBox="0 0 18 18" className="size-[18px]"><path d="M1.500 1v2h10V1M1.500 17v-2h10v2M1.500 5.500h10v7h-10zM15.500 1v5M15.500 10v7" fill="none" stroke="#fff" strokeWidth="1.300" /><path d="M14 6h3v3h-3z" fill="#fff" /></svg>
      </button>
      {APPS.map((a) => (
        <button key={a.name} aria-label={a.name} className={`flex h-10 w-[49px] flex-col items-center justify-between pt-2 ${a.active ? "bg-[#4b5f68]" : ""}`}>
          <svg viewBox="0 0 24 24" className="size-6">{a.art}</svg>
          {a.run && <span className={`h-0.5 bg-[#76b9ed] ${a.active ? "w-full" : "w-[39px]"}`} />}
        </button>
      ))}
      <div className="ml-auto flex items-center gap-[6px] pr-1">
        <svg viewBox="0 0 18 18" className="size-[18px]"><path d="M4 11l5-5 5 5" fill="none" stroke="#fff" strokeWidth="1.400" /></svg>
        <svg viewBox="0 0 18 18" className="size-[18px]"><path d="M2 3.500l14-2V15H2z" fill="none" stroke="#fff" strokeWidth="1.500" /><path d="M5 11l2-4h5M12 5v3H9" fill="none" stroke="#fff" /><circle cx="13.500" cy="14" r="3.500" fill="#f59a1c" /></svg>
        <svg viewBox="0 0 18 18" className="size-[18px]"><path d="M5.500 5.500h10v8h-9M16.500 8v3M1 4h5v3a2 2 0 0 1-4 0V4M2.500 2v2M4.500 2v2M3.500 9v4h2" fill="none" stroke="#fff" strokeWidth="1.300" /><path d="M7 7h4v5H7z" fill="#fff" /></svg>
        <svg viewBox="0 0 18 18" className="size-[18px]"><path d="M3 16C3 9 8 4 15 4M6.500 16c0-5 3-8.500 8.500-8.500M10 16c0-3 2-5 5-5" fill="none" stroke="#fff" strokeWidth="1.400" /><circle cx="14" cy="15" r="1.500" fill="#fff" /></svg>
        <svg viewBox="0 0 18 18" className="size-[18px]"><path d="M1.500 6.500h3l4-4v13l-4-4h-3zM11 6.500c1.500 1.500 1.500 3.500 0 5M13.500 4.500c3 2.500 3 6.500 0 9" fill="none" stroke="#fff" strokeWidth="1.200" /></svg>
        <span className="w-[18px] text-center text-[15px]">A</span>
        <div className="w-[72px] text-center text-[12px] leading-[19px]"><div>12:57</div><div>2023-01-11</div></div>
        <button aria-label="notifications" className="ml-2 mr-5">
          <svg viewBox="0 0 18 18" className="size-[18px]"><path d="M1.500 2.500h15v11h-4l-3 3v-3h-8z" fill="none" stroke="#fff" strokeWidth="1.300" /><path d="M16 10c-4 1-4 6 0 6 2-1 2-3 1-4" fill="#dfe5ee" /></svg>
        </button>
      </div>
    </footer>
  );
}

// ---------------------------------------------------------------- window

const MENUS: [string, string][] = [
  ["项目", "P"], ["页", "A"], ["布局空间", "L"], ["编辑", "E"], ["视图", "V"], ["插入", "I"],
  ["项目数据", "R"], ["查找", "F"], ["选项", "O"], ["工具", "U"], ["窗口", "W"], ["帮助", "H"],
];

function WindowButtons({ size, gap }: { size: string; gap: string }) {
  return (
    <div className={`ml-auto flex items-center ${gap}`}>
      {["M0 5.500h10", "M.5 2.500h7v7h-7zM2.500 2.500v-2h7v7h-2", "M.5.5l9 9M9.500.5l-9 9"].map((d) => (
        <button key={d} aria-label="window control" className="grid place-items-center">
          <svg viewBox="0 0 10 10" className={size}><path d={d} fill="none" stroke="#222" /></svg>
        </button>
      ))}
    </div>
  );
}

function Splitter() {
  return <div className="w-[5px] shrink-0 border-r-2 border-[#7f8594] bg-[#d5dae8]" />;
}

export default function App() {
  return (
    <div className="relative flex h-screen w-full flex-col overflow-hidden bg-white font-['Noto_Sans','Noto_Sans_CJK_SC',sans-serif] text-[12px] leading-4 text-black">
      <header className="flex h-6 shrink-0 items-center gap-[5px] pl-0.5 pr-5">
        <Logo className="size-4" />
        <span className="font-['Roboto','Noto_Sans_CJK_SC',sans-serif] text-[13px]">EPLAN Electric P8 2.7 - C:\Users\Public\EPLAN\Data\项目\Company name\示例项目 - [=work1+Power/4]</span>
        <WindowButtons size="size-[10px]" gap="gap-9" />
      </header>
      <nav className="flex h-[29px] shrink-0 items-center gap-[10px] border-b border-[#ececec] pl-[10px] pr-2">
        <span className="-mr-[6px]"><Icon name="doc" size="size-4" /></span>
        {MENUS.map(([t, k]) => <button key={t} className="whitespace-nowrap"><Mnemonic label={t} k={k} /></button>)}
        <WindowButtons size="size-[8px]" gap="gap-3" />
      </nav>
      <div className="mb-px w-[1220px] max-w-full shrink-0 overflow-hidden">
        <ToolRow items={BAR_1} />
        <ToolRow items={BAR_2} />
        <ToolRow items={BAR_3} />
      </div>

      <main className="flex min-h-0 flex-1">
        <aside className="flex w-[225px] shrink-0 flex-col pl-[5px]">
          <section className="flex h-[429px] flex-col bg-[#f0f0f0]">
            <PanelTitle title="页 - 示例项目" up />
            <div className="mr-[6px] flex min-h-0 flex-1 flex-col border-b-2 border-r-2 border-black pb-1 pl-[5px] pr-1">
              <Filters id="pages" />
              <div className="flex min-h-0 flex-1 flex-col border border-[#828790] bg-white">
                <div className="flex min-h-0 flex-1">
                  <Tree rows={PAGE_TREE} />
                  <VScroll thumb="mt-[54px] h-[158px]" />
                </div>
                <HScroll thumb="w-[86%]" />
              </div>
            </div>
            <div className="h-[27px]"><PanelTabs /></div>
          </section>
          <div className="my-px h-[6px] shrink-0 border-b-2 border-[#7f8594] bg-[#d5dae8]" />
          <section className="flex min-h-0 flex-1 flex-col pb-[5px] pt-0.5">
            <PanelTitle title="图形预览" up />
            <PreviewPanel />
          </section>
        </aside>
        <Splitter />
        <ToolColumn items={DRAW_BAR} />

        <section className="flex w-[286px] shrink-0 flex-col bg-[#f0f0f0] pl-[7px]">
          <PanelTitle title="符号选择 - IEC_symbol" />
          <div className="mr-2 flex min-h-0 flex-1 flex-col border-b-2 border-r-2 border-black pb-1 pl-[5px] pr-1">
            <Filters id="symbols" low />
            <div className="flex min-h-0 flex-1 flex-col border border-[#828790] bg-white">
              <div className="flex min-h-0 flex-1 pl-[19px]">
                <Tree rows={SYMBOL_TREE} />
                <VScroll thumb="mt-[75px] h-[506px]" />
              </div>
              <HScroll thumb="w-[75%]" />
            </div>
          </div>
          <div className="h-[30px]"><PanelTabs /></div>
        </section>
        <Splitter />

        <Editor />
        <div className="ml-px flex w-8 shrink-0 justify-center overflow-hidden"><ToolColumn items={WIRE_BAR} /></div>
      </main>

      <div className="flex h-[19px] shrink-0 items-center border-t border-[#d0d0d0] leading-[17px]">
        <span className="flex-1 pl-0.5">多重复制</span>
        <span className="w-[488px] border-l border-[#d0d0d0]">&nbsp;</span>
        <span className="w-[221px] border-l border-[#d0d0d0] pl-1">打开: 4.00 mm</span>
        <span className="w-32 border-l border-[#d0d0d0] pl-1">逻辑 1:1</span>
        <span className="w-[84px] border-l border-[#d0d0d0] pl-1">#</span>
        <span className="w-[62px] border-l border-[#d0d0d0]">&nbsp;</span>
      </div>
      <Taskbar />

      {/* side slider knob that floats over the preview */}
      <div className="absolute left-0 top-[669px] flex w-3 flex-col items-center">
        <span className="h-5 w-[6px] rounded-t bg-[#566a78]" />
        <span className="h-6 w-[6px] bg-[#3a8fb5]" />
        <span className="size-3 rounded-full border border-[#3f5a6a] bg-[#4bb8e0]" />
      </div>
      <PopupMenu />
    </div>
  );
}
